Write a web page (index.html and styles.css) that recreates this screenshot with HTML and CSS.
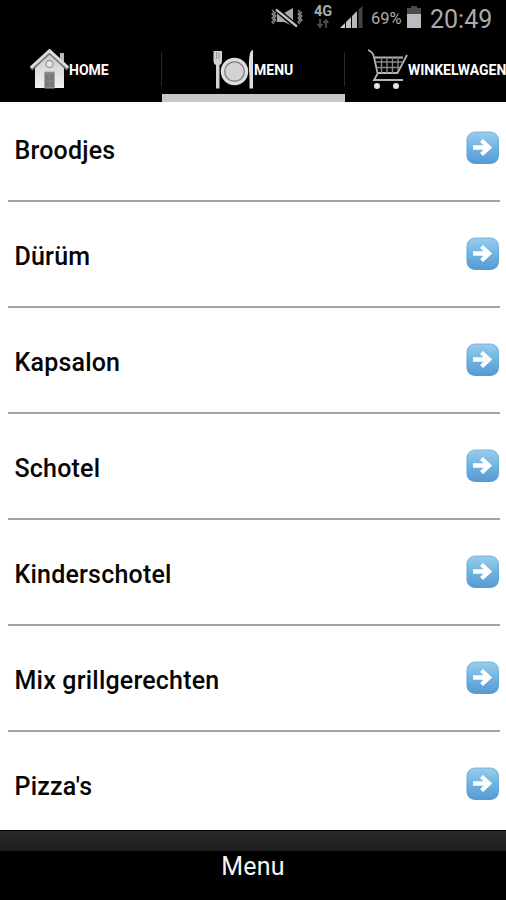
FILE: index.html
```html
<!DOCTYPE html>
<html lang="nl">
<head>
<meta charset="utf-8">
<title>Menu</title>
<link rel="stylesheet" href="styles.css">
</head>
<body>
<svg class="defs" width="0" height="0">
  <defs>
    <linearGradient id="blue" x1="0" y1="0" x2="0" y2="1"><stop offset="0" stop-color="#9acdec"/><stop offset=".5" stop-color="#70b4e2"/><stop offset="1" stop-color="#5599d1"/></linearGradient>
    <linearGradient id="silver" x1="0" y1="0" x2="0" y2="1"><stop offset="0" stop-color="#c8c8c8"/><stop offset="1" stop-color="#f1f1f1"/></linearGradient>
    <symbol id="arrow" viewBox="0 0 34 34">
      <rect x=".5" y=".5" width="32.500" height="32.500" rx="8.500" fill="url(#blue)"/>
      <rect x="1.200" y="1.200" width="31" height="31" rx="8" fill="none" stroke="#62a3d2" stroke-opacity=".4"/>
      <path d="M7 16.500h15M15.500 9.500l7.500 7-7.500 7" fill="none" stroke="#fff" stroke-width="4.300"/>
    </symbol>
  </defs>
</svg>
<div class="screen">
  <header class="status">
    <svg class="mute" width="34" height="22" viewBox="0 0 34 22">
      <path d="M7 6h7l9-5v18l-9-4H7z" fill="#a9a9a9"/>
      <path d="M7 3l20 17" stroke="#000" stroke-width="5"/>
      <path d="M6 2.500l21 17" stroke="#bbb" stroke-width="2.300"/>
      <path d="M2 3l2 2-2 2 2 2-2 2 2 2-2 2 2 2M6 5l-2 2 2 2-2 2 2 2-2 2M28 3l2 2-2 2 2 2-2 2 2 2-2 2 2 2M32 5l-2 2 2 2-2 2 2 2-2 2" fill="none" stroke="#858585" stroke-width="1.300"/>
    </svg>
    <span class="network"><span>4G</span>
      <svg width="14" height="10" viewBox="0 0 14 10"><path d="M4 0v7M1.500 5L4 8l2.500-3M10 9V2M7.500 4L10 1l2.500 3" fill="none" stroke="#505050" stroke-width="1.700"/></svg>
    </span>
    <svg class="signal" width="24" height="23" viewBox="0 0 24 23">
      <path d="M0 22l5-5v5z" fill="#ccc"/><path d="M6 22v-6l5-5v11z" fill="#c2c2c2"/><path d="M12 22V10l5-5v17z" fill="#b8b8b8"/><path d="M18.500 22V3.500L22.500 0v22z" fill="#444"/>
    </svg>
    <span class="percent">69%</span>
    <svg class="battery" width="16" height="23" viewBox="0 0 16 23"><path d="M5 0h6v2h4v20H1V2h4z" fill="#4a4a4a"/><path d="M1 8h14v14H1z" fill="#bcbcbc"/></svg>
    <time class="clock">20:49</time>
  </header>
  <nav class="tabs">
    <a class="tab home">
      <svg width="39" height="41" viewBox="0 0 39 41">
        <path d="M30 4h4v12l-4-4z" fill="#bbb"/>
        <path d="M5 19L19.500 3 34 19v20H5z" fill="url(#silver)"/>
        <path d="M1 20L19.500 3 38 20" fill="none" stroke="#777" stroke-width="4"/>
        <path d="M1 18.500L19.500 1.700 38 18.500" fill="none" stroke="#ddd" stroke-width="3"/>
        <circle cx="19.500" cy="15" r="3.500" fill="#e8e8e8" stroke="#999" stroke-width="1.300"/>
        <path d="M14.500 23h10v16h-10z" fill="#777" stroke="#aaa"/><path d="M16 25h7M16 32h7M19.500 25v13" stroke="#8a8a8a"/>
      </svg><span>HOME</span>
    </a>
    <a class="tab menu active">
      <svg width="41" height="41" viewBox="0 0 41 41">
        <path d="M.500 2h8.500v10q0 3-2.500 4v23.500h-3.500V16Q.500 15 .500 12z" fill="#d2d2d2"/><path d="M3.500 3v7M6 3v7" stroke="#888" stroke-width=".8"/>
        <circle cx="21.500" cy="22.500" r="13.700" fill="#ddd"/><circle cx="21.500" cy="22.500" r="9.800" fill="#d3d3d3" stroke="#888" stroke-width="1.500"/>
        <path d="M36.500 39.500V27q-1.500-14 .500-23 1-3 3-3v38.500z" fill="#dedede"/>
      </svg><span>MENU</span>
    </a>
    <a class="tab cart">
      <svg width="42" height="41" viewBox="0 0 42 41">
        <path d="M1 1q5 2 6 7l3.500 16M7 8.500h29M11 24h19.500L40 6M11 24l-4 7h29" fill="none" stroke="#b4b4b4" stroke-width="1.800"/>
        <path d="M9 13h27M10 18.500h23M14.500 8v16M20 8v16M25.500 8v16M31 8v14" stroke="#858585" stroke-width="1.400"/>
        <circle cx="10" cy="37" r="3" fill="#e4e4e4"/><circle cx="29" cy="37" r="3" fill="#e4e4e4"/>
      </svg><span>WINKELWAGEN</span>
    </a>
  </nav>
  <main class="list">
    <div class="row"><span>Broodjes</span><svg class="go"><use href="#arrow"/></svg></div>
    <div class="row"><span>Dürüm</span><svg class="go"><use href="#arrow"/></svg></div>
    <div class="row"><span>Kapsalon</span><svg class="go"><use href="#arrow"/></svg></div>
    <div class="row"><span>Schotel</span><svg class="go"><use href="#arrow"/></svg></div>
    <div class="row"><span>Kinderschotel</span><svg class="go"><use href="#arrow"/></svg></div>
    <div class="row"><span>Mix grillgerechten</span><svg class="go"><use href="#arrow"/></svg></div>
    <div class="row"><span>Pizza's</span><svg class="go"><use href="#arrow"/></svg></div>
  </main>
  <footer class="footer">Menu</footer>
</div>
</body>
</html>
```
FILE: styles.css
```css
* { box-sizing: border-box; }
body { margin: 0; font-family: Roboto, sans-serif; }
.defs { display: block; }
.screen { width: 506px; height: 900px; display: flex; flex-direction: column; overflow: hidden; background: #fff; }
.status { height: 38px; flex: none; display: flex; align-items: flex-start; padding: 0 14px 0 270px; background: #000; color: #aaa; }
.mute { flex: none; margin-top: 7px; }
.network { width: 20px; flex: none; margin: 4px 0 0 9px; display: flex; flex-direction: column; align-items: center; font-size: 14.5px; line-height: 15px; font-weight: 700; }
.signal { flex: none; margin: 6px 0 0 7px; }
.percent { width: 31px; flex: none; margin: 8px 0 0 7px; font-size: 16.5px; line-height: 22px; white-space: nowrap; }
.battery { flex: none; margin: 6px 0 0 4px; }
.clock { margin: 5px 0 0 8px; font-size: 25px; line-height: 30px; white-space: nowrap; }
.tabs { height: 64px; flex: none; display: grid; grid-template-columns: 162px 183px 161px; background: #000; color: #fff; }
.tab { display: flex; align-items: flex-start; padding-top: 11px; min-width: 0; border-bottom: 8px solid transparent; font-size: 14px; font-weight: 700; line-height: 42px; white-space: nowrap; background: linear-gradient(#292929, #292929) right 14px / 1px 34px no-repeat; }
.tab svg { flex: none; }
.home { padding-left: 30px; }
.menu { padding-left: 51px; }
.cart { padding-left: 22px; background: none; }
.cart span { margin-left: -1px; }
.active { border-bottom-color: #c8c8c8; }
.list { height: 728px; flex: none; padding: 0 6px 0 8px; }
.row { height: 106px; display: flex; justify-content: space-between; align-items: flex-end; padding: 0 0 34px 6.5px; border-bottom: 2px solid #a4a4a4; color: #050505; font-size: 25px; font-weight: 500; line-height: 30px; letter-spacing: .2px; }
.row:first-child { height: 100px; }
.row:last-child { height: 98px; padding-bottom: 28px; border-bottom: 0; }
.go { width: 34px; height: 34px; margin: 0 .5px 1px 0; }
.footer { height: 70px; flex: none; padding-top: 21px; border-top: 1px solid #000; background: linear-gradient(#292929, #1d1d1d) top / 100% 20px no-repeat #000; color: #f5f5f5; font-size: 25px; line-height: 30px; text-align: center; letter-spacing: .2px; }
```
